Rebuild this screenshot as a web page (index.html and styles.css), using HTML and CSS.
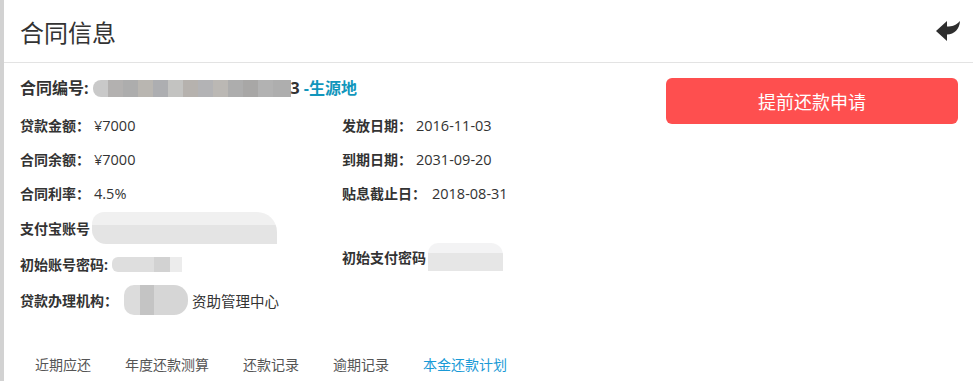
FILE: index.html
```html
<html>
<head>
    <meta charset="utf-8">
    <link rel="stylesheet" href="styles.css">
</head>

<body>

<div class="panel">
    <div class="panel-head">
        <h2>合同信息</h2>
        <a class="back" href="#" title="返回">
            <svg width="26" height="24" viewBox="0 0 26 24">
                <path d="M1 12 L12 2 L12 7.5 C17 7.5 21 6.5 25 2 C24.5 10 19.5 15.5 12 15.5 L12 22 Z" fill="#2e2e2e"/>
            </svg>
        </a>
    </div>

    <div class="panel-body">
        <div class="info">
            <div class="contract">
                合同编号:<span class="mosaic mosaic-dark"></span>3 <span class="origin">-生源地</span>
            </div>

            <div class="grid">
                <div class="item"><label>贷款金额：</label><span>¥7000</span></div>
                <div class="item"><label>发放日期：</label><span>2016-11-03</span></div>

                <div class="item"><label>合同余额：</label><span>¥7000</span></div>
                <div class="item"><label>到期日期：</label><span>2031-09-20</span></div>

                <div class="item"><label>合同利率：</label><span>4.5%</span></div>
                <div class="item"><label>贴息截止日：</label><span class="wide">2018-08-31</span></div>

                <div class="item tall"><label>支付宝账号</label><span class="mosaic mosaic-alipay"></span></div>
                <div class="item tall"></div>

                <div class="item tall"><label>初始账号密码:</label><span class="mosaic mosaic-pwd"></span></div>
                <div class="item tall up"><label>初始支付密码</label><span class="mosaic mosaic-pay"></span></div>

                <div class="item tall"><label>贷款办理机构：</label><span class="mosaic mosaic-org"></span><span class="org">资助管理中心</span></div>
                <div class="item tall"></div>
            </div>
        </div>

        <div class="actions">
            <button>提前还款申请</button>
        </div>
    </div>

    <div class="tabs">
        <a href="#">近期应还</a>
        <a href="#">年度还款测算</a>
        <a href="#">还款记录</a>
        <a href="#">逾期记录</a>
        <a href="#" class="active">本金还款计划</a>
    </div>
</div>

</body>
</html>
```

FILE: styles.css
```css
body {
    font-family: "Open Sans", "Noto Sans CJK SC", sans-serif;
    background-color: #fff;
    color: #333;
    margin: 0;
    padding: 0;
}

.panel {
    height: 381px;
    border-left: 4px solid #d2d2d2;
    box-sizing: border-box;
    overflow: hidden;
}

.panel-head {
    display: flex;
    align-items: center;
    justify-content: space-between;
    height: 62px;
    padding: 0 12px 0 16px;
    border-bottom: 1px solid #e3e3e3;
}

.panel-head h2 {
    margin: 0;
    font-size: 24px;
    font-weight: normal;
    color: #333;
    font-family: "Noto Sans CJK SC", sans-serif;
}

.back {
    display: block;
    height: 24px;
}

.panel-body {
    display: flex;
    padding: 13px 15px 0 16px;
}

.info {
    flex: 1;
}

.contract {
    height: 24px;
    line-height: 24px;
    font-size: 16px;
    font-weight: bold;
    display: flex;
    align-items: center;
    margin-bottom: 8px;
}

.origin {
    color: #1196bc;
    margin-left: 4px;
}

.grid {
    display: grid;
    grid-template-columns: 322px 1fr;
}

.item {
    height: 34px;
    display: flex;
    align-items: center;
    font-size: 14px;
}

.item span {
    font-size: 14.5px;
}

.item.tall {
    height: 36px;
}

.item.up {
    margin-top: -7px;
}

.item label {
    font-weight: bold;
    margin-right: 4px;
}

.item .wide {
    margin-left: 2px;
}

.org {
    margin-left: 4px;
}

.mosaic {
    display: inline-block;
}

.mosaic-dark {
    width: 198px;
    height: 17px;
    margin-left: 4px;
    border-radius: 8px 0 0 8px;
    background: linear-gradient(90deg,
        #c9c9c9 0 15px, #b3b1b0 15px 30px, #adadad 30px 45px, #b9b6b1 45px 60px,
        #adaeb1 60px 75px, #c3c3c1 75px 90px, #b6b2ae 90px 105px, #b3b3b5 105px 120px,
        #bbb8b4 120px 135px, #adadad 135px 150px, #a8a7a6 150px 165px, #b2b2b2 165px 180px,
        #aeaeae 180px 198px);
}

.mosaic-alipay {
    width: 185px;
    height: 32px;
    margin-left: -2px;
    border-radius: 12px 20px 0 14px;
    background: linear-gradient(180deg, #f0f0f0 0 40%, #e4e4e4 40% 100%);
}

.mosaic-pwd {
    width: 70px;
    height: 15px;
    border-radius: 6px 0 0 6px;
    background: linear-gradient(90deg, #dedede 0 42px, #d2d2d2 42px 58px, #ececec 58px 70px);
}

.mosaic-pay {
    width: 75px;
    height: 28px;
    margin-left: -2px;
    border-radius: 10px 12px 0 0;
    background: linear-gradient(180deg, #f3f3f4 0 35%, #e6e6e6 35% 100%);
}

.mosaic-org {
    width: 64px;
    height: 30px;
    margin-left: 2px;
    border-radius: 10px 14px 14px 10px;
    background: linear-gradient(90deg, #dcdcdc 0 16px, #c4c4c4 16px 30px, #d6d6d6 30px 64px);
}

.actions {
    width: 292px;
}

button {
    width: 100%;
    height: 46px;
    margin-top: 2px;
    font-size: 18px;
    font-family: "Noto Sans CJK SC", sans-serif;
    background-color: #fe4f4f;
    color: #fff;
    border: none;
    border-radius: 6px;
    cursor: pointer;
}

.tabs {
    display: flex;
    padding-left: 14px;
    margin-top: 37px;
}

.tabs a {
    padding: 0 17px;
    font-size: 14px;
    line-height: 20px;
    color: #555;
    text-decoration: none;
}

.tabs a.active {
    color: #1a9ad6;
}
```
